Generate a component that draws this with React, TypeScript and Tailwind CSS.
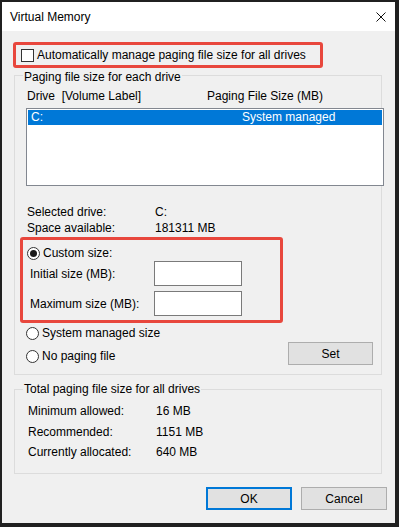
import React from "react";

const font = { fontFamily: '"Liberation Sans", Arial, sans-serif' };

function Radio({ checked }: { checked?: boolean }) {
  return (
    <span className="flex h-[13px] w-[13px] flex-shrink-0 items-center justify-center rounded-full border border-[#333333] bg-white">
      {checked && <span className="h-[7px] w-[7px] rounded-full bg-[#1a1a1a]" />}
    </span>
  );
}

function Row({ label, value }: { label: string; value: string }) {
  return (
    <div className="flex h-[16px] items-center leading-[16px]">
      <span className="w-[128px]">{label}</span>
      <span>{value}</span>
    </div>
  );
}

export default function App() {
  return (
    <div
      style={font}
      className="box-border h-[527px] w-[399px] border-t-2 border-l-2 border-r-4 border-b-4 border-[#202020] bg-[#f0f0f0] text-[12px] text-black"
    >
      {/* title bar */}
      <div className="flex h-[29px] items-center justify-between bg-white pl-[8px] pr-[9px]">
        <span className="text-[12px] leading-[16px]">Virtual Memory</span>
        <svg width="10" height="10" viewBox="0 0 10 10" className="mt-[1px]">
          <path d="M0.5 0.5 L9.5 9.5 M9.5 0.5 L0.5 9.5" stroke="#111" strokeWidth="1" fill="none" />
        </svg>
      </div>

      {/* auto manage */}
      <div className="ml-[11px] mt-[11px] box-border flex h-[26px] w-[310px] items-center rounded-[3px] border-[3px] border-[#e8473d] pl-[5px]">
        <span className="h-[13px] w-[13px] border border-[#333333] bg-white" />
        <span className="ml-[3px] leading-[16px]">Automatically manage paging file size for all drives</span>
      </div>

      {/* group 1 */}
      <div className="ml-[12px] mt-[7px] box-border h-[300px] w-[368px] border border-[#dcdcdc]">
        <div className="-mt-[7px] ml-[8px] w-fit bg-[#f0f0f0] px-[1px] leading-[16px]">
          Paging file size for each drive
        </div>
        <div className="mt-[3px] flex h-[16px] pl-[12px] leading-[16px]">
          <span className="w-[180px]">Drive&nbsp; [Volume Label]</span>
          <span>Paging File Size (MB)</span>
        </div>
        <div className="ml-[11px] mt-[4px] box-border h-[78px] w-[358px] border border-[#828790] bg-white p-[1px]">
          <div className="flex h-[15px] items-center bg-[#0078d7] text-white leading-[15px]">
            <span className="ml-[3px] w-[211px]">C:</span>
            <span>System managed</span>
          </div>
        </div>
        <div className="mt-[18px] pl-[12px]">
          <Row label="Selected drive:" value="C:" />
          <Row label="Space available:" value="181311 MB" />
        </div>

        {/* custom size */}
        <div className="ml-[5px] mt-[1px] box-border h-[86px] w-[263px] rounded-[3px] border-[3px] border-[#e8473d]">
          <div className="ml-[4px] mt-[6px] flex h-[15px] items-center leading-[15px]">
            <Radio checked />
            <span className="ml-[3px]">Custom size:</span>
          </div>
          <div className="flex h-[25px] items-center pl-[7px]">
            <span className="w-[124px]">Initial size (MB):</span>
            <span className="box-border h-[25px] w-[88px] border border-[#7a7a7a] bg-white" />
          </div>
          <div className="mt-[5px] flex h-[25px] items-center pl-[7px]">
            <span className="w-[124px]">Maximum size (MB):</span>
            <span className="box-border h-[25px] w-[88px] border border-[#7a7a7a] bg-white" />
          </div>
        </div>

        <div className="ml-[11px] mt-[2px] flex h-[16px] items-center leading-[16px]">
          <Radio />
          <span className="ml-[3px]">System managed size</span>
        </div>
        <div className="mt-[1px] flex h-[23px] items-start">
          <div className="ml-[11px] mt-[6px] flex h-[16px] items-center leading-[16px]">
            <Radio />
            <span className="ml-[3px]">No paging file</span>
          </div>
          <button className="ml-auto mr-[8px] box-border h-[23px] w-[85px] border border-[#adadad] bg-[#e1e1e1] leading-[16px]">
            Set
          </button>
        </div>
      </div>

      {/* group 2 */}
      <div className="ml-[12px] mt-[14px] box-border h-[85px] w-[368px] border border-[#dcdcdc]">
        <div className="-mt-[9px] ml-[8px] w-fit bg-[#f0f0f0] px-[1px] leading-[16px]">
          Total paging file size for all drives
        </div>
        <div className="pl-[13px]">
          <div className="mt-[6px]">
            <Row label="Minimum allowed:" value="16 MB" />
          </div>
          <div className="mt-[5px]">
            <Row label="Recommended:" value="1151 MB" />
          </div>
          <div className="mt-[4px]">
            <Row label="Currently allocated:" value="640 MB" />
          </div>
        </div>
      </div>

      {/* buttons */}
      <div className="ml-[204px] mt-[13px] flex gap-[9px]">
        <button className="box-border h-[23px] w-[86px] border-2 border-[#0078d7] bg-[#e1e1e1] leading-[16px]">
          OK
        </button>
        <button className="box-border h-[23px] w-[86px] border border-[#adadad] bg-[#e1e1e1] leading-[16px]">
          Cancel
        </button>
      </div>
    </div>
  );
}
